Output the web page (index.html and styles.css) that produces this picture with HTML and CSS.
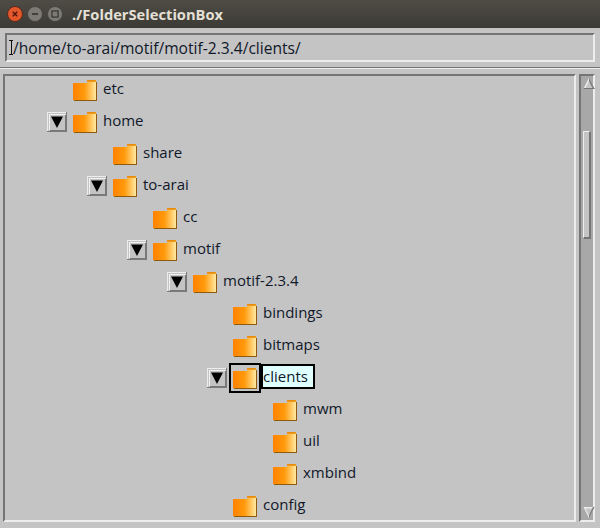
FILE: index.html
```html
<!DOCTYPE html>
<html lang="en">
<head>
<meta charset="utf-8">
<title>./FolderSelectionBox</title>
<link rel="stylesheet" href="styles.css">
</head>
<body>
<svg class="defs" width="0" height="0" aria-hidden="true">
  <defs>
    <linearGradient id="fg" x1="0" x2="1" y1="0" y2="0">
      <stop offset="0" stop-color="#ff8200"/>
      <stop offset="0.5" stop-color="#ff9a0c"/>
      <stop offset="1" stop-color="#ffe9a0"/>
    </linearGradient>
    <symbol id="folder" viewBox="0 0 24 21">
      <path d="M14 0h9v2h-9z" fill="#f29a1c"/>
      <path d="M14 0h8v1h-8z" fill="#e8890c"/>
      <path d="M0 3h14l1-1h8v18H0z" fill="url(#fg)"/>
      <path d="M0 20h23v-18h1v19H1v-1z" fill="#8f5a10"/>
    </symbol>
    <symbol id="down" viewBox="0 0 20 20">
      <path d="M0 0h20v20H0z" fill="#7a7a7a"/>
      <path d="M0 0h19v1H1v18H0z" fill="#ededed"/>
      <path d="M1 1h18v18H1z" fill="#c4c4c4"/>
      <path d="M2 2h17v1H3v15H2z" fill="#f0f0f0"/>
      <path d="M18 3h1v16H3v-1h15z" fill="#777"/>
      <path d="M4 4.500h12L10 16z" fill="#000"/>
    </symbol>
  </defs>
</svg>
<div class="window">
  <header class="titlebar">
    <div class="controls">
      <span class="ctl close"><svg viewBox="0 0 16 16"><path d="M5.500 5.500l5 5M10.500 5.500l-5 5" stroke="#4a1408" stroke-width="1.500"/></svg></span>
      <span class="ctl"><svg viewBox="0 0 16 16"><path d="M4.500 8h7" stroke="#3a3a36" stroke-width="2"/></svg></span>
      <span class="ctl"><svg viewBox="0 0 16 16"><rect x="4.500" y="4.500" width="7" height="7" fill="none" stroke="#3a3a36" stroke-width="1.500"/></svg></span>
    </div>
    <h1 class="title">./FolderSelectionBox</h1>
  </header>
  <main class="client">
    <div class="pathfield"><span class="caret"></span><span class="pathtext">/home/to-arai/motif/motif-2.3.4/clients/</span></div>
    <div class="separator"></div>
    <div class="browser">
      <div class="tree">
        <div class="row l0"><span class="slot"></span><svg class="folder"><use href="#folder"/></svg><span class="label">etc</span></div>
        <div class="row l0"><span class="slot"><svg class="toggle"><use href="#down"/></svg></span><svg class="folder"><use href="#folder"/></svg><span class="label">home</span></div>
        <div class="row l1"><span class="slot"></span><svg class="folder"><use href="#folder"/></svg><span class="label">share</span></div>
        <div class="row l1"><span class="slot"><svg class="toggle"><use href="#down"/></svg></span><svg class="folder"><use href="#folder"/></svg><span class="label">to-arai</span></div>
        <div class="row l2"><span class="slot"></span><svg class="folder"><use href="#folder"/></svg><span class="label">cc</span></div>
        <div class="row l2"><span class="slot"><svg class="toggle"><use href="#down"/></svg></span><svg class="folder"><use href="#folder"/></svg><span class="label">motif</span></div>
        <div class="row l3"><span class="slot"><svg class="toggle"><use href="#down"/></svg></span><svg class="folder"><use href="#folder"/></svg><span class="label">motif-2.3.4</span></div>
        <div class="row l4"><span class="slot"></span><svg class="folder"><use href="#folder"/></svg><span class="label">bindings</span></div>
        <div class="row l4"><span class="slot"></span><svg class="folder"><use href="#folder"/></svg><span class="label">bitmaps</span></div>
        <div class="row l4 selected"><span class="slot"><svg class="toggle"><use href="#down"/></svg></span><span class="selicon"><svg class="folder"><use href="#folder"/></svg></span><span class="label">clients</span></div>
        <div class="row l5"><span class="slot"></span><svg class="folder"><use href="#folder"/></svg><span class="label">mwm</span></div>
        <div class="row l5"><span class="slot"></span><svg class="folder"><use href="#folder"/></svg><span class="label">uil</span></div>
        <div class="row l5"><span class="slot"></span><svg class="folder"><use href="#folder"/></svg><span class="label">xmbind</span></div>
        <div class="row l4"><span class="slot"></span><svg class="folder"><use href="#folder"/></svg><span class="label">config</span></div>
      </div>
      <div class="scrollbar">
        <svg class="arrow" viewBox="0 0 11 11"><path d="M5.500 0L11 11H0z" fill="#c4c4c4"/><path d="M5.500 0L0 11h1.500L5.500 3z" fill="#ededed"/><path d="M5.500 0L11 11H9.500L5.500 3z" fill="#777"/><path d="M0 10h11v1H0z" fill="#777"/></svg>
        <div class="thumb"></div>
        <div class="trough"></div>
        <svg class="arrow" viewBox="0 0 11 11"><path d="M0 0h11L5.500 11z" fill="#c4c4c4"/><path d="M0 0h11v1.500H2L5.500 9v2z" fill="#ededed"/><path d="M11 0L5.500 11V8.500L9.500 0z" fill="#777"/></svg>
      </div>
    </div>
  </main>
</div>
</body>
</html>
```
FILE: styles.css
```css
* { box-sizing: border-box; }
html, body { margin: 0; padding: 0; }
body { width: 600px; height: 528px; overflow: hidden; background: #c4c4c4; font-family: "Open Sans", "Liberation Sans", sans-serif; }
.defs { display: block; height: 0; }
.window { width: 600px; height: 528px; display: flex; flex-direction: column; }

.titlebar { height: 28px; flex: none; display: flex; align-items: center; padding-left: 7px; background: linear-gradient(#4f4c45, #3b3a35); }
.controls { display: flex; gap: 4px; }
.ctl { width: 16px; height: 16px; border-radius: 50%; background: #7c7a72; border: 1px solid #45443f; display: block; }
.ctl svg { display: block; width: 14px; height: 14px; }
.ctl.close { background: #e2572c; border-color: #5a2a18; }
.title { margin: 0 0 0 9px; font-size: 14.700px; font-weight: 700; color: #e4e0d6; line-height: 28px; }

.client { flex: 1; min-height: 0; display: flex; flex-direction: column; padding: 5px 5px 6px 3px; }
.pathfield { height: 29px; margin-left: 2px; flex: none; display: flex; align-items: center; padding-left: 2px; border: 2px solid; border-color: #757575 #ededed #ededed #757575; position: relative; }
.pathtext { font-size: 15.600px; color: #10182a; }
.caret { width: 4px; height: 15px; margin-right: 0; background: linear-gradient(#111, #111) center/1px 100% no-repeat, linear-gradient(#111, #111) top/100% 1px no-repeat, linear-gradient(#111, #111) bottom/100% 1px no-repeat; }
.separator { height: 2px; flex: none; margin: 5px -5px 5px -3px; border-top: 1px solid #757575; border-bottom: 1px solid #ededed; }

.browser { flex: 1; min-height: 0; display: flex; gap: 3px; }
.tree { flex: 1; min-width: 0; overflow: hidden; padding: 0; border: 2px solid; border-color: #757575 #ededed #ededed #757575; }
.row { height: 32px; display: flex; align-items: center; }
.row:first-child { margin-top: -2px; }
.l0 { padding-left: 42px; }
.l1 { padding-left: 82px; }
.l2 { padding-left: 122px; }
.l3 { padding-left: 162px; }
.l4 { padding-left: 202px; }
.l5 { padding-left: 242px; }
.slot { width: 26px; height: 20px; flex: none; display: block; }
.toggle { display: block; width: 20px; height: 20px; }
.folder { display: block; width: 24px; height: 21px; margin-top: 1px; flex: none; }
.label { margin-left: 6px; margin-bottom: 4px; font-size: 15px; color: #10182a; line-height: 20px; }

.selected .selicon { display: block; margin-left: -4px; padding: 2px 2px 0; border: 2px solid #000; height: 30px; }
.selected .label { margin-left: 0; margin-bottom: 3px; padding: 0 5px 0 0; height: 25px; line-height: 20px; border: 2px solid #000; background: #e0ffff; }

.scrollbar { width: 16px; flex: none; display: flex; flex-direction: column; padding: 2px; border: 2px solid; border-color: #757575 #ededed #ededed #757575; background: #a8a8a8; }
.arrow { display: block; width: 12px; height: 11px; flex: none; }
.thumb { height: 108px; margin-top: 42px; flex: none; background: #c4c4c4; border: 1px solid; border-color: #ededed #757575 #757575 #ededed; border-width: 1px 2px 2px 1px; }
.trough { flex: 1; }
```
